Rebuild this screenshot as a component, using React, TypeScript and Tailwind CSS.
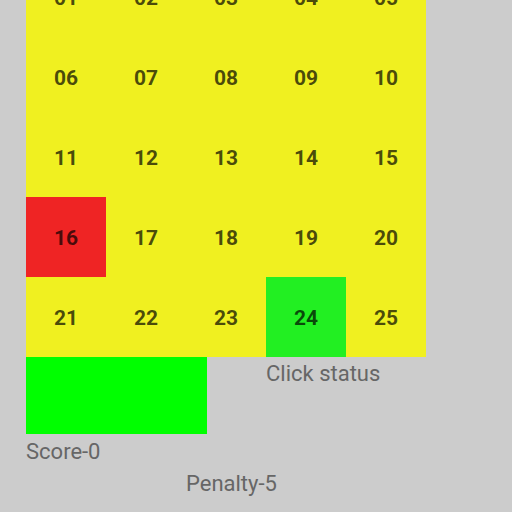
const cells = Array.from({ length: 25 }, (_, i) => i + 1);

function cellColor(n: number) {
  if (n === 16) return 'bg-[#ef2424]';
  if (n === 24) return 'bg-[#22ef22]';
  return 'bg-[#f0f020]';
}

export default function App() {
  return (
    <div className="h-[512px] w-[512px] overflow-hidden bg-[#cccccc] pl-[26px] font-['Roboto',sans-serif]">
      <div className="mt-[-43px] grid w-[400px] grid-cols-5">
        {cells.map((n) => (
          <div
            key={n}
            className={`flex h-20 items-center justify-center pt-1 text-[21px] font-bold text-black/70 ${cellColor(n)}`}
          >
            {String(n).padStart(2, '0')}
          </div>
        ))}
      </div>
      <div className="flex items-start">
        <div className="h-[77px] w-[181px] bg-[#00ff00]" />
        <span className="ml-[59px] text-[22px] leading-[34px] text-[#666666]">Click status</span>
      </div>
      <div className="text-[22px] leading-[36px] text-[#666666]">Score-0</div>
      <div className="ml-[160px] text-[22px] leading-[28px] text-[#666666]">Penalty-5</div>
    </div>
  );
}
